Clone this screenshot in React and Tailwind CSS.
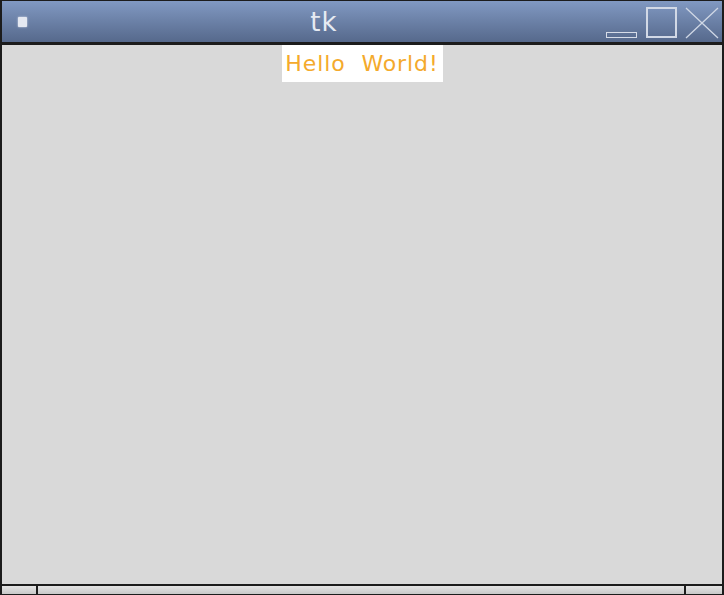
export default function App() {
  return (
    <div className="w-[724px] h-[595px] bg-[#1c1c1c] flex flex-col pt-px pb-px pl-[2px] pr-[2px] overflow-hidden" style={{ fontFamily: '"DejaVu Sans", sans-serif' }}>
      {/* title bar */}
      <div className="h-[41px] flex items-stretch bg-gradient-to-b from-[#8199c2] to-[#56698c] text-[#e6eaf2]">
        <div className="w-[41px] flex items-start pl-[16px] pt-[16px]">
          <div className="w-[9px] h-[10px] bg-[#e4e8f1] rounded-[1px] shadow-[0_0_2px_#e4e8f1]" />
        </div>
        <div className="flex-1 flex justify-center">
          <span className="text-[26px] leading-none mt-[8px] tracking-[1px]">tk</span>
        </div>
        <div className="w-[117px] relative">
          <div className="absolute left-[1px] top-[31px] w-[31px] h-[6px] border border-[#d6dce8]" />
          <div className="absolute left-[41px] top-[6px] w-[31px] h-[31px] border-2 border-[#d2d9e6]" />
          <svg className="absolute left-[80px] top-[6px]" width="34" height="32" viewBox="0 0 34 32">
            <path d="M1 1 L33 31 M33 1 L1 31" stroke="#cfd7e5" strokeWidth="1.3" fill="none" />
          </svg>
        </div>
      </div>
      <div className="h-[3px] bg-[#1c1c1c]" />
      {/* content */}
      <div className="flex-1 bg-[#d9d9d9] flex justify-center">
        <div className="h-[37px] w-[161px] bg-white flex items-center justify-center">
          <span className="text-[22px] text-[#f4aa2c] whitespace-pre tracking-[0.9px] leading-none">Hello  World!</span>
        </div>
      </div>
      {/* bottom */}
      <div className="h-[2px] bg-[#1c1c1c]" />
      <div className="h-[8px] flex gap-[2px] bg-[#1c1c1c]">
        <div className="w-[34px] bg-gradient-to-b from-[#e4e4e4] to-[#c8c8c8]" />
        <div className="flex-1 bg-gradient-to-b from-[#e4e4e4] to-[#c8c8c8]" />
        <div className="w-[36px] bg-gradient-to-b from-[#e4e4e4] to-[#c8c8c8]" />
      </div>
    </div>
  );
}
